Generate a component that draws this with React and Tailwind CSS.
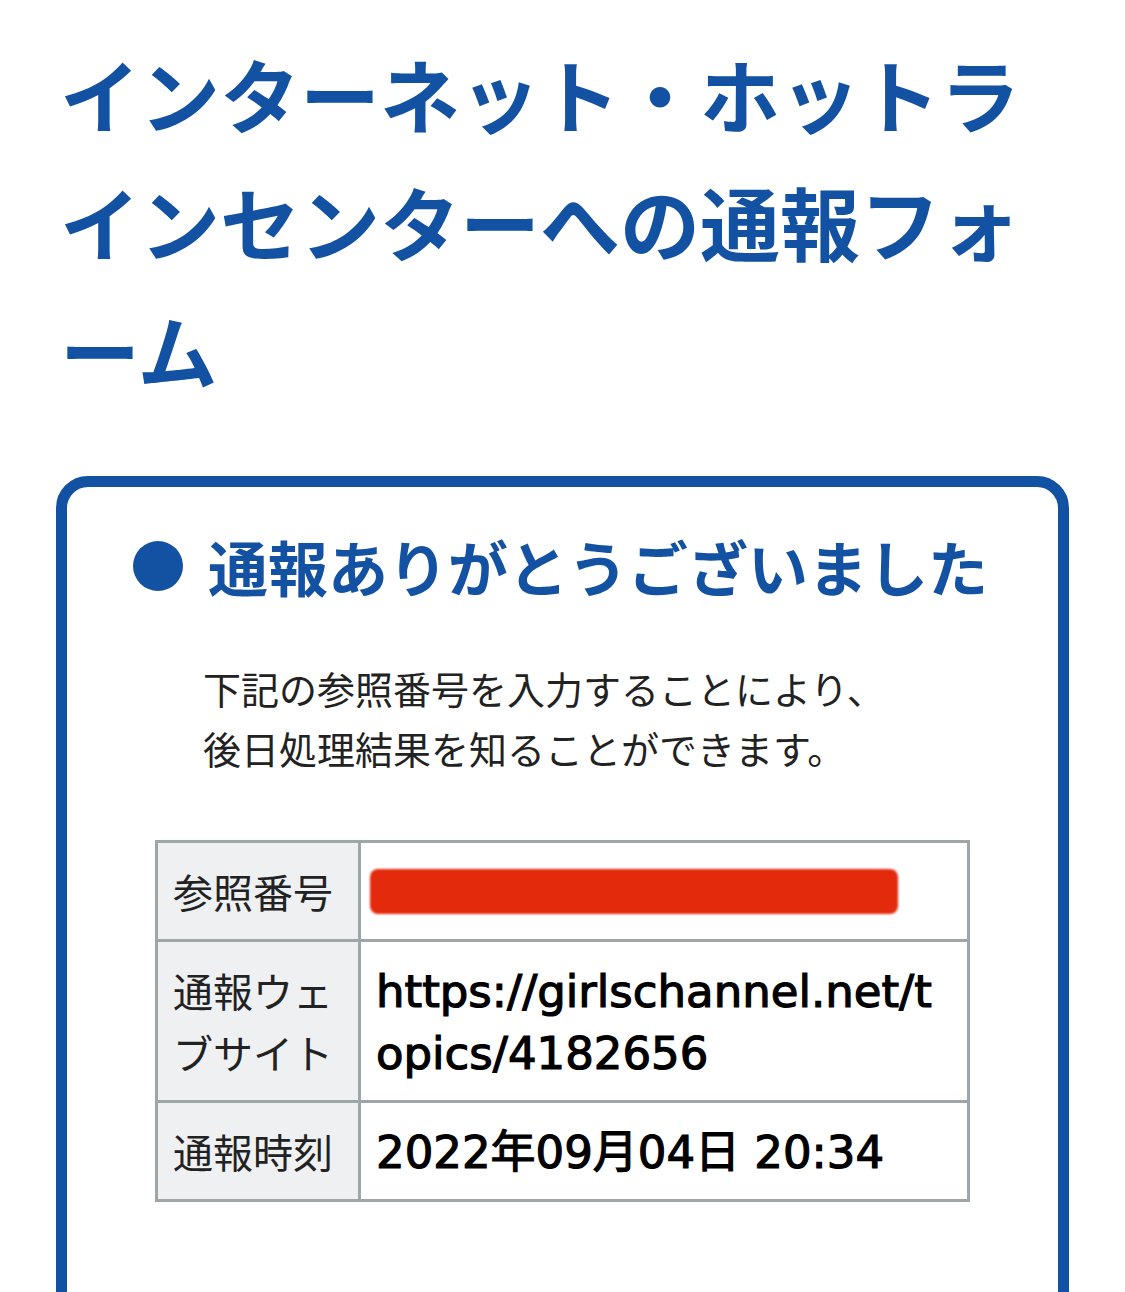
const FONT = { fontFamily: '"Noto Sans CJK JP", "Noto Sans", sans-serif' }

const rows = [
  { label: '参照番号', value: null },
  { label: '通報ウェブサイト', value: 'https://girlschannel.net/topics/4182656' },
  { label: '通報時刻', value: '2022年09月04日 20:34' },
]

function ResultTable() {
  return (
    <table className="w-[815px] border-collapse border-[3px] border-[#9ea6a8] ml-[88px]">
      <tbody>
        {rows.map((row) => (
          <tr key={row.label}>
            <th className="w-[203px] border-[3px] border-[#9ea6a8] bg-[#eef0f2] pl-[15px] pr-[14px] py-[17px] text-left align-middle text-[40px] font-normal leading-[62px] text-[#222]">
              {row.label}
            </th>
            <td className="border-[3px] border-[#9ea6a8] bg-white pl-[15px] pr-[20px] pt-[19px] pb-[15px] align-middle font-['DejaVu_Sans','Noto_Sans_CJK_JP',sans-serif] text-[45px] font-normal leading-[62px] text-black break-all [-webkit-text-stroke:1.2px_black]">
              {row.value ?? (
                <div className="h-[45px] w-[528px] -ml-[6px] -mt-[4px] rounded-[8px] bg-[#e42a0c] blur-[1px]" />
              )}
            </td>
          </tr>
        ))}
      </tbody>
    </table>
  )
}

export default function App() {
  return (
    <div className="h-[1292px] w-[1125px] overflow-hidden bg-white" style={FONT}>
      <h1 className="px-[60px] pt-[28px] text-[80px] font-bold leading-[128px] text-[#1351a2] [line-break:loose]">
        インターネット・ホットラインセンターへの通報フォーム
      </h1>

      <section className="mx-[56px] mt-[64px] rounded-[32px] border-[11px] border-[#1351a2] pb-[200px]">
        <h2 className="flex items-center gap-[25px] pl-[66px] pt-[34px] text-[60px] font-bold leading-[90px] text-[#1351a2]">
          <span className="h-[50px] w-[50px] shrink-0 rounded-full bg-[#1351a2]" />
          通報ありがとうございました
        </h2>

        <p className="mt-[47px] pl-[136px] text-[38px] leading-[60px] text-[#222]">
          下記の参照番号を入力することにより、
          <br />
          後日処理結果を知ることができます。
        </p>

        <div className="mt-[62px]">
          <ResultTable />
        </div>
      </section>
    </div>
  )
}
